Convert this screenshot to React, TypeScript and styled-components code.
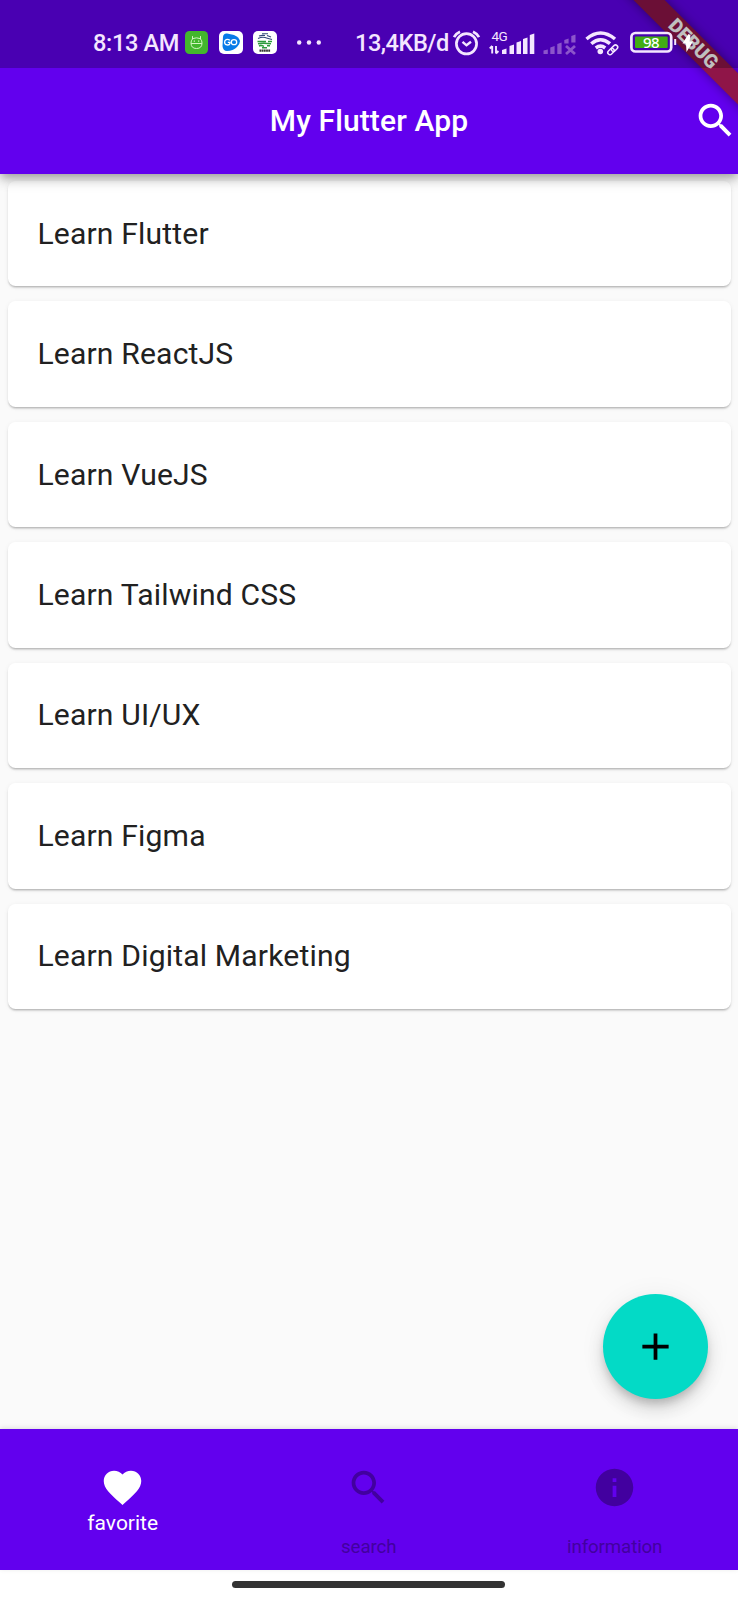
import React from "react";
import styled, { createGlobalStyle } from "styled-components";

const GlobalStyle = createGlobalStyle`
  * { box-sizing: border-box; }
  body { margin: 0; background: #fff; font-family: Roboto, "Liberation Sans", sans-serif; }
`;

const Screen = styled.div`
  position: relative;
  display: flex;
  flex-direction: column;
  width: 738px;
  height: 1600px;
  overflow: hidden;
  background: #fafafa;
`;

const Header = styled.header`
  position: relative;
  z-index: 1;
  flex: none;
  height: 173.5px;
  background: #6200ee;
  box-shadow: 0 4px 8px -2px rgba(0, 0, 0, 0.2), 0 7px 10px rgba(0, 0, 0, 0.14), 0 2px 18px rgba(0, 0, 0, 0.12);
`;

const StatusBar = styled.div`
  position: relative;
  z-index: 2;
  display: flex;
  align-items: center;
  height: 68px;
  padding: 17px 0 0 93px;
  background: rgba(0, 0, 0, 0.25);
  color: #f4e6ff;
`;

const StatusText = styled.span<{ $width: number; $spacing: number }>`
  flex: none;
  width: ${(p) => p.$width}px;
  font-size: 23.6px;
  font-weight: 500;
  line-height: 28px;
  letter-spacing: ${(p) => p.$spacing}px;
  white-space: nowrap;
`;

const StatusIcon = styled.svg<{ $gap: number }>`
  flex: none;
  display: block;
  overflow: visible;
  margin-left: ${(p) => p.$gap}px;
`;

const StatusSpacer = styled.span`
  flex: none;
  width: 34px;
`;

const Toolbar = styled.div`
  display: grid;
  grid-template-columns: 1fr auto 1fr;
  align-items: center;
  height: 105.5px;
`;

const Title = styled.h1`
  grid-column: 2;
  margin: 0;
  font-size: 30px;
  font-weight: 500;
  line-height: 36px;
  letter-spacing: 0.12px;
  color: #fff;
`;

const IconButton = styled.button`
  display: flex;
  justify-self: end;
  padding: 0;
  border: 0;
  background: none;
  color: #fff;
`;

const Banner = styled.div`
  position: absolute;
  z-index: 1;
  top: 33.4px;
  left: 593px;
  width: 200px;
  height: 22.4px;
  transform: rotate(45deg);
  background: #8f1548;
  box-shadow: 0 0 11px rgba(0, 0, 0, 0.4);
  color: #fff;
  font-size: 19.2px;
  font-weight: 900;
  line-height: 22.4px;
  text-align: center;
`;

const List = styled.ul`
  flex: 1;
  display: flex;
  flex-direction: column;
  gap: 15.04px;
  margin: 0;
  padding: 7.5px 7.5px;
  list-style: none;
`;

const Card = styled.li`
  display: flex;
  align-items: center;
  height: 105.4px;
  padding: 0 30px;
  border-radius: 7.5px;
  background: #fff;
  box-shadow: 0 2px 2px -1px rgba(0, 0, 0, 0.2), 0 2px 2px rgba(0, 0, 0, 0.08), 0 1px 5px rgba(0, 0, 0, 0.06);
  color: #212121;
  font-size: 30.1px;
  line-height: 36px;
  letter-spacing: 0.16px;
`;

const Fab = styled.button`
  position: absolute;
  right: 30.5px;
  bottom: 201.5px;
  display: flex;
  align-items: center;
  justify-content: center;
  width: 105px;
  height: 105px;
  padding: 0;
  border: 0;
  border-radius: 50%;
  background: #03dac6;
  color: #000;
  box-shadow: 0 6px 9px -2px rgba(0, 0, 0, 0.18), 0 11px 18px rgba(0, 0, 0, 0.12), 0 2px 28px rgba(0, 0, 0, 0.06);
`;

const BottomNav = styled.nav`
  position: relative;
  display: grid;
  grid-template-columns: repeat(3, 1fr);
  flex: none;
  height: 141px;
  background: #6200ee;
  box-shadow: 0 -1px 5px rgba(0, 0, 0, 0.12);
`;

const NavItem = styled.div<{ $active?: boolean }>`
  display: flex;
  flex-direction: column;
  align-items: center;
  gap: ${(p) => (p.$active ? 1 : 25.5)}px;
  padding: 35.5px 0.6px 0 0;
  color: ${(p) => (p.$active ? "#fff" : "#42009f")};
`;

const NavLabel = styled.span<{ $active?: boolean }>`
  font-size: ${(p) => (p.$active ? 21 : 18.7)}px;
  line-height: 24px;
  letter-spacing: ${(p) => (p.$active ? 0 : -0.12)}px;
`;

const GestureArea = styled.div`
  display: flex;
  justify-content: center;
  flex: none;
  height: 30px;
  padding: 11px 1px 0 0;
  background: #fff;
`;

const GestureBar = styled.div`
  width: 273px;
  height: 7px;
  border-radius: 4px;
  background: #333;
`;

const ICONS = {
  search:
    "M15.5 14h-.79l-.28-.27C15.41 12.59 16 11.11 16 9.5 16 5.91 13.09 3 9.5 3S3 5.91 3 9.5 5.91 16 9.5 16c1.61 0 3.09-.59 4.23-1.57l.27.28v.79l5 4.99L20.49 19l-4.99-5zm-6 0C7.01 14 5 11.99 5 9.5S7.01 5 9.5 5 14 7.01 14 9.5 11.99 14 9.5 14z",
  heart:
    "M12 21.35l-1.45-1.32C5.4 15.36 2 12.28 2 8.5 2 5.42 4.42 3 7.5 3c1.74 0 3.41.81 4.5 2.09C13.09 3.81 14.76 3 16.5 3 19.58 3 22 5.42 22 8.5c0 3.78-3.4 6.86-8.55 11.54L12 21.35z",
  info: "M12 2C6.48 2 2 6.48 2 12s4.48 10 10 10 10-4.48 10-10S17.52 2 12 2zm1 15h-2v-6h2v6zm0-8h-2V7h2v2z",
  add: "M19 13h-6v6h-2v-6H5v-2h6V5h2v6h6v2z",
};

const MaterialIcon = ({ name }: { name: keyof typeof ICONS }) => (
  <svg width="45" height="45" viewBox="0 0 24 24" fill="currentColor">
    <path d={ICONS[name]} />
  </svg>
);

const CatAppIcon = () => (
  <StatusIcon $gap={0} width="23" height="23" viewBox="0 0 23 23" fill="none">
    <rect width="23" height="23" rx="4.5" fill="#43b72d" />
    <g stroke="#d5f5c4" strokeWidth="1" strokeLinecap="round" strokeLinejoin="round">
      <path d="M7.5 5.500V8Q6 9.500 6 12Q6 17.500 11.500 17.500T17 12Q17 9.500 15.500 8V5.500M8 7.500Q11.500 6 15 7.500" />
      <path d="M6.500 12.500H16.500M9.300 9.800V10.500M13.700 9.800V10.500" />
    </g>
  </StatusIcon>
);

const GoAppIcon = () => (
  <StatusIcon $gap={11} width="24" height="23" viewBox="0 0 24 23">
    <rect width="24" height="23" rx="5" fill="#fff" />
    <path d="M4 6Q4.300 2.200 8 2.500L15 4Q20 6 21 10Q21 13 18 16Q14 20 8 20Q4 20 3.500 15Z" fill="#087be8" />
    <g fill="none" stroke="#fff" strokeWidth="1.3">
      <path d="M11 9.200C8 7.200 5.600 9 5.600 11.200C5.600 14.600 10.300 14.800 11 12.300V11.400H8.800" />
      <ellipse cx="15" cy="11.200" rx="2.700" ry="2.500" />
    </g>
  </StatusIcon>
);

const StripesAppIcon = () => (
  <StatusIcon $gap={10} width="24" height="23" viewBox="0 0 24 23" fill="none">
    <rect width="24" height="23" rx="5" fill="#fff" />
    <path d="M9 2.800H15M6 5Q9 4 12 4.500M14 4.500L18 6M5 7.500Q9 5.700 12 6.500T19 8.500" stroke="#304878" strokeWidth="1.100" />
    <path d="M4.500 10.500H13M15 10.500H19M5 12.700Q10 11.700 18 12.700M6 15Q8 14 11 15.300M14 14.800H17M9 16.800H14" stroke="#2b9a3c" strokeWidth="1.400" />
    <path d="M6.500 19.600H17.500" stroke="#333" strokeWidth="2.400" strokeDasharray="1.800 .400" />
  </StatusIcon>
);

const MoreDots = () => (
  <StatusIcon $gap={20} width="24" height="6" viewBox="0 0 24 6" fill="currentColor">
    <circle cx="2.200" cy="2.500" r="2.200" />
    <circle cx="12" cy="2.500" r="2.200" />
    <circle cx="21.800" cy="2.500" r="2.200" />
  </StatusIcon>
);

const AlarmIcon = () => (
  <StatusIcon $gap={5.4} width="27" height="26" viewBox="0 0 27 26" fill="none" stroke="currentColor" strokeWidth="2.700">
    <circle cx="13.500" cy="13.800" r="10.100" />
    <path d="M1 7.200Q3 3.500 7 1.800M26 7.200Q24 3.500 20 1.800" />
    <path d="M9.500 11.800L13.500 15.300L18 11.800" strokeWidth="2.400" />
  </StatusIcon>
);

const NetworkType = styled.text`
  font-family: Roboto, "Liberation Sans", sans-serif;
  font-size: 13.5px;
  letter-spacing: -0.5px;
`;

const SignalIcon = () => (
  <StatusIcon $gap={9} width="47" height="26" viewBox="0 0 47 26" fill="currentColor">
    <NetworkType x="2.500" y="10.600">4G</NetworkType>
    <path d="M3.200 16V23.500M7 16V23.500M.8 18.500L3.200 16M9.400 21L7 23.500" fill="none" stroke="currentColor" strokeWidth="1.900" />
    <path d="M13 20L17.500 18.500V24H13ZM20.500 16L25 14.500V24H20.500ZM27.500 12.500L32 11V24H27.500ZM34 9L38.500 7.500V24H34ZM40.800 5L45.300 3.500V24H40.800Z" />
  </StatusIcon>
);

const NoSignalIcon = () => (
  <StatusIcon $gap={6.2} width="34" height="26" viewBox="0 0 34 26" fill="#8c55cb">
    <path d="M.5 20.500L4.800 19.500V24H.5ZM7.300 17.500L11.600 16V24H7.300ZM14.300 14L18.600 12.500V24H14.300ZM21.300 10L25.600 8.500V13.500H21.300ZM28.300 6L32.500 4.500V12.500H28.300Z" />
    <path d="M23 16L32 24M32 16L23 24" stroke="#8c55cb" strokeWidth="2.800" />
  </StatusIcon>
);

const WifiIcon = () => (
  <StatusIcon $gap={8.8} width="36" height="26" viewBox="0 0 36 26" fill="none" stroke="currentColor">
    <path d="M1.500 9Q15.500 -3 30 9M6.300 13.700Q15.500 5.700 25 13.700M10.800 18Q15.500 14.300 20.200 18" strokeWidth="3.500" />
    <circle cx="15.300" cy="21.500" r="2.800" fill="currentColor" stroke="none" />
    <g strokeWidth="1.500">
      <rect x="-3.600" y="-2.200" width="7.200" height="4.400" rx="2.200" transform="translate(26 21.500) rotate(-45)" />
      <rect x="-3.600" y="-2.200" width="7.200" height="4.400" rx="2.200" transform="translate(29.500 18.200) rotate(-45)" />
    </g>
  </StatusIcon>
);

const BatteryLevel = styled.text`
  font-family: "Noto Sans", Roboto, sans-serif;
  font-size: 15px;
  font-weight: 500;
  letter-spacing: -0.6px;
`;

const BatteryIcon = () => (
  <StatusIcon $gap={8.3} width="64" height="24" viewBox="0 0 64 24">
    <rect x="1.400" y="2" width="39.800" height="18.500" rx="4" fill="none" stroke="#f4e6ff" strokeWidth="2.700" />
    <rect x="5" y="5.500" width="32.700" height="11.500" rx="1" fill="#41ad13" />
    <BatteryLevel x="21" y="16.600" textAnchor="middle" fill="#fff">98</BatteryLevel>
    <path d="M44.200 8H46.200V14H44.200Z" fill="#f4e6ff" />
    <path d="M58.500 3L52.500 12.500H56L56.500 21L63 10.500H59.500L60.500 4Z" fill="#fff" />
  </StatusIcon>
);

const topics = [
  "Learn Flutter",
  "Learn ReactJS",
  "Learn VueJS",
  "Learn Tailwind CSS",
  "Learn UI/UX",
  "Learn Figma",
  "Learn Digital Marketing",
];

const tabs: { icon: keyof typeof ICONS; label: string; active?: boolean }[] = [
  { icon: "heart", label: "favorite", active: true },
  { icon: "search", label: "search" },
  { icon: "info", label: "information" },
];

export default function App() {
  return (
    <Screen>
      <GlobalStyle />
      <Header>
        <StatusBar>
          <StatusText $width={92} $spacing={-0.35}>8:13 AM</StatusText>
          <CatAppIcon />
          <GoAppIcon />
          <StripesAppIcon />
          <MoreDots />
          <StatusSpacer />
          <StatusText $width={93} $spacing={-0.5}>13,4KB/d</StatusText>
          <AlarmIcon />
          <SignalIcon />
          <NoSignalIcon />
          <WifiIcon />
          <BatteryIcon />
        </StatusBar>
        <Toolbar>
          <Title>My Flutter App</Title>
          <IconButton aria-label="Search">
            <MaterialIcon name="search" />
          </IconButton>
        </Toolbar>
        <Banner>DEBUG</Banner>
      </Header>
      <List>
        {topics.map((topic) => (
          <Card key={topic}>{topic}</Card>
        ))}
      </List>
      <BottomNav>
        {tabs.map((tab) => (
          <NavItem key={tab.label} $active={tab.active}>
            <MaterialIcon name={tab.icon} />
            <NavLabel $active={tab.active}>{tab.label}</NavLabel>
          </NavItem>
        ))}
      </BottomNav>
      <GestureArea>
        <GestureBar />
      </GestureArea>
      <Fab aria-label="Add">
        <MaterialIcon name="add" />
      </Fab>
    </Screen>
  );
}
